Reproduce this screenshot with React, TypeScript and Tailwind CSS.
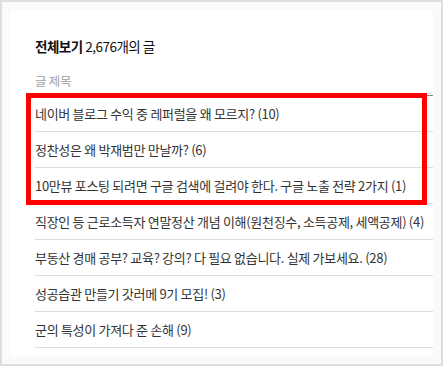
const posts = [
  { title: "네이버 블로그 수익 중 레퍼럴을 왜 모르지?", count: 10 },
  { title: "정찬성은 왜 박재범만 만날까?", count: 6 },
  { title: "10만뷰 포스팅 되려면 구글 검색에 걸려야 한다. 구글 노출 전략 2가지", count: 1 },
  { title: "직장인 등 근로소득자 연말정산 개념 이해(원천징수, 소득공제, 세액공제)", count: 4 },
  { title: "부동산 경매 공부? 교육? 강의? 다 필요 없습니다. 실제 가보세요.", count: 28 },
  { title: "성공습관 만들기 갓러메 9기 모집!", count: 3 },
  { title: "군의 특성이 가져다 준 손해", count: 9 },
]

export default function App() {
  return (
    <div
      className="relative h-[366px] w-[443px] border-2 border-[#dedede] bg-[#fafafa] p-2"
      style={{ fontFamily: '"Noto Sans CJK KR", "Noto Sans", sans-serif' }}
    >
      <div className="h-full bg-white pl-[25px] pt-[26px]">
        <div className="h-5 text-[13.5px] leading-5 tracking-[-0.5px] text-[#111]">
          <span className="font-bold">전체보기</span> 2,676개의 글
        </div>
        <div className="mt-3 flex h-7 items-center border-b border-[#888] text-[12.5px] tracking-[-0.3px] text-[#a0a0a0]">
          글 제목
        </div>
        <ul>
          {posts.map(post => (
            <li key={post.title} className="flex h-9 items-center whitespace-nowrap border-b border-[#dcdcdc] text-[13px] tracking-[-0.3px] text-[#333]">
              {post.title} ({post.count})
            </li>
          ))}
        </ul>
      </div>
      {/* annotation box */}
      <div className="absolute left-[24px] top-[91px] h-[112px] w-[401px] border-[5px] border-[#ff0000]" />
    </div>
  )
}
